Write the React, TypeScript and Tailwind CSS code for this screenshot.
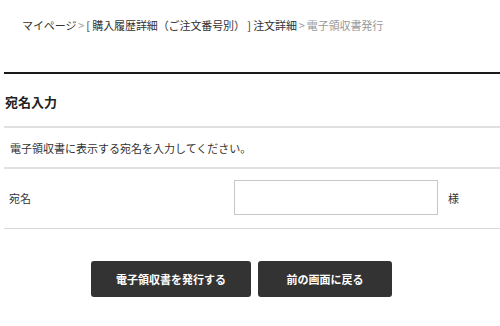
export default function App() {
  return (
    <div
      className="w-[500px] h-[326px] bg-white text-[#333] overflow-hidden"
      style={{ fontFamily: '"Noto Sans CJK JP", "Noto Sans", sans-serif' }}
    >
      {/* Breadcrumb */}
      <nav className="pl-[22px] pt-[17px] text-[11px] leading-[16px] whitespace-nowrap tracking-[-0.1px]">
        <span>マイページ</span>
        <span className="text-[#999] mx-[2px]">&gt;</span>
        <span>[ 購入履歴詳細（ご注文番号別） ] 注文詳細</span>
        <span className="text-[#999] mx-[2px]">&gt;</span>
        <span className="text-[#999]">電子領収書発行</span>
      </nav>

      <div className="ml-[4px] mt-[39px]">
        <div className="h-[2px] bg-[#1a1a1a]" />

        {/* Heading */}
        <div className="pl-[1px] pt-[20px] pb-[16px] text-[13px] leading-[16px] font-bold text-[#222]">
          宛名入力
        </div>
        <div className="h-[2px] bg-[#e0e0e0]" />

        {/* Description */}
        <div className="pl-[6px] pt-[12px] pb-[11px] text-[11px] leading-[16px]">
          電子領収書に表示する宛名を入力してください。
        </div>
        <div className="h-[2px] bg-[#e0e0e0]" />

        {/* Form row */}
        <div className="flex items-center pt-[11px] pb-[13px] text-[11px] leading-[16px]">
          <div className="pl-[5px] w-[230px]">宛名</div>
          <input
            type="text"
            className="w-[204px] h-[35px] border border-[#c8c8c8] outline-none px-2"
          />
          <div className="ml-[10px]">様</div>
        </div>
        <div className="h-[1px] bg-[#d8d8d8]" />

        {/* Buttons */}
        <div className="flex gap-[7px] pl-[87px] mt-[32px]">
          <button className="w-[160px] h-[36px] bg-[#333] rounded-[3px] text-white text-[11px] font-bold">
            電子領収書を発行する
          </button>
          <button className="w-[134px] h-[36px] bg-[#333] rounded-[3px] text-white text-[11px] font-bold">
            前の画面に戻る
          </button>
        </div>
      </div>
    </div>
  );
}
